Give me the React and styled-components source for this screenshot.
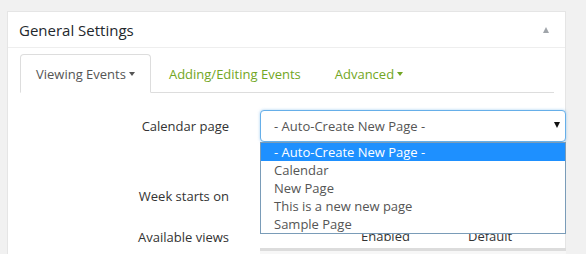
import React from 'react';
import styled, { createGlobalStyle } from 'styled-components';

const GlobalStyle = createGlobalStyle`
  html, body {
    margin: 0;
    padding: 0;
    background: #f1f1f1;
    font-family: "Open Sans", "Liberation Sans", sans-serif;
    color: #444;
    overflow: hidden;
  }
`;

const Page = styled.div`
  padding: 11px 7px 0 7px;
  width: 573px;
  height: 254px;
  box-sizing: border-box;
`;

const Panel = styled.div`
  background: #fff;
  border: 1px solid #e5e5e5;
  border-bottom: none;
  height: 243px;
  box-sizing: border-box;
`;

const PanelHeader = styled.div`
  display: flex;
  align-items: center;
  justify-content: space-between;
  height: 35px;
  padding: 0 16px 0 11px;
  border-bottom: 1px solid #eee;
`;

const PanelTitle = styled.h2`
  margin: 0;
  font-size: 15px;
  font-weight: 400;
  color: #23282d;
`;

const Toggle = styled.span`
  width: 0;
  height: 0;
  border-left: 3.5px solid transparent;
  border-right: 3.5px solid transparent;
  border-bottom: 6px solid #a0a5aa;
`;

const PanelBody = styled.div`
  padding: 6px 11px 0 12px;
`;

const Tabs = styled.div`
  display: flex;
  border-bottom: 1px solid #ddd;
  height: 38px;
`;

const Tab = styled.div`
  display: flex;
  align-items: center;
  gap: 3px;
  padding: 0 15px;
  margin-bottom: -1px;
  font-size: 13px;
  color: ${(p) => (p.active ? '#555' : '#72a624')};
  background: ${(p) => (p.active ? '#fff' : 'transparent')};
  border: 1px solid ${(p) => (p.active ? '#ddd' : 'transparent')};
  border-bottom-color: ${(p) => (p.active ? '#fff' : 'transparent')};
  border-radius: 4px 4px 0 0;
  margin-right: 2px;
`;

const Caret = styled.span`
  width: 0;
  height: 0;
  border-left: 3.5px solid transparent;
  border-right: 3.5px solid transparent;
  border-top: 4px solid currentColor;
  margin-top: 1px;
`;

const Form = styled.div`
  padding-top: 17px;
`;

const Row = styled.div`
  display: grid;
  grid-template-columns: 240px 306px;
  align-items: ${(p) => p.align || 'center'};
  margin-bottom: ${(p) => p.gap || 0}px;
`;

const Label = styled.div`
  text-align: right;
  padding-right: 31px;
  font-size: 13px;
  color: #333;
  padding-top: ${(p) => p.top || 0}px;
`;

const Field = styled.div`
  position: relative;
`;

const SelectBox = styled.div`
  height: 32px;
  box-sizing: border-box;
  border: 1px solid #66afe9;
  border-radius: 4px;
  box-shadow: 0 0 3px rgba(102, 175, 233, 0.6);
  display: flex;
  align-items: center;
  justify-content: space-between;
  padding: 0 5px 0 13px;
  font-size: 13px;
  color: #555;
  background: #fff;
`;

const Arrow = styled.span`
  width: 0;
  height: 0;
  border-left: 3.5px solid transparent;
  border-right: 3.5px solid transparent;
  border-top: 6px solid #111;
  margin-top: -3px;
`;

const DropList = styled.ul`
  position: absolute;
  top: 32px;
  left: 0;
  right: 0;
  margin: 0;
  padding: 0;
  list-style: none;
  background: #fff;
  border: 1px solid #7a9cb8;
  z-index: 5;
`;

const Option = styled.li`
  height: 18px;
  line-height: 18px;
  padding-left: 13px;
  font-size: 13px;
  color: ${(p) => (p.selected ? '#fff' : '#555')};
  background: ${(p) => (p.selected ? '#1e90ff' : 'transparent')};
`;

const HiddenSelect = styled.div`
  height: 32px;
`;

const ViewsTable = styled.div`
  display: grid;
  grid-template-columns: 101px 107px 1fr;
  align-items: end;
  box-sizing: border-box;
  height: 25px;
  font-size: 13px;
  line-height: 17px;
  color: #333;
  border-bottom: 3px solid #dcdcdc;
  padding-bottom: 3px;
`;

const Stripe = styled.div`
  height: 6px;
  background: #f7f7f7;
`;

const options = [
  '- Auto-Create New Page -',
  'Calendar',
  'New Page',
  'This is a new new page',
  'Sample Page',
];

export default function App() {
  return (
    <>
      <GlobalStyle />
      <Page>
        <Panel>
          <PanelHeader>
            <PanelTitle>General Settings</PanelTitle>
            <Toggle />
          </PanelHeader>
          <PanelBody>
            <Tabs>
              <Tab active>
                Viewing Events <Caret />
              </Tab>
              <Tab>Adding/Editing Events</Tab>
              <Tab>
                Advanced <Caret />
              </Tab>
            </Tabs>
            <Form>
              <Row gap={38}>
                <Label>Calendar page</Label>
                <Field>
                  <SelectBox>
                    - Auto-Create New Page -
                    <Arrow />
                  </SelectBox>
                  <DropList>
                    {options.map((o, i) => (
                      <Option key={o} selected={i === 0}>
                        {o}
                      </Option>
                    ))}
                  </DropList>
                </Field>
              </Row>
              <Row gap={14}>
                <Label>Week starts on</Label>
                <HiddenSelect />
              </Row>
              <Row align="start">
                <Label top={2}>Available views</Label>
                <div>
                  <ViewsTable>
                    <span />
                    <span>Enabled</span>
                    <span>Default</span>
                  </ViewsTable>
                  <Stripe />
                </div>
              </Row>
            </Form>
          </PanelBody>
        </Panel>
      </Page>
    </>
  );
}
